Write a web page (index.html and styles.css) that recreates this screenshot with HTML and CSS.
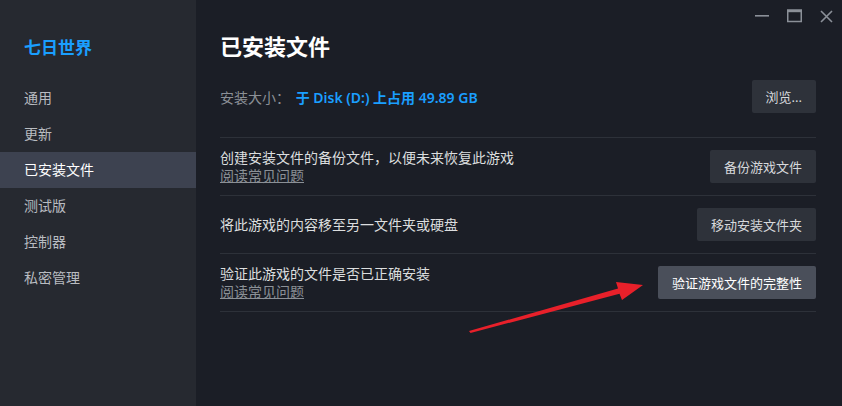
FILE: index.html
```html
<!DOCTYPE html>
<html>
<head>
  <title>已安装文件</title>
  <link rel="stylesheet" href="styles.css">
</head>
<body>
  <div class="sidebar">
    <div class="game-title">七日世界</div>
    <div class="nav-item">通用</div>
    <div class="nav-item">更新</div>
    <div class="nav-item active">已安装文件</div>
    <div class="nav-item">测试版</div>
    <div class="nav-item">控制器</div>
    <div class="nav-item">私密管理</div>
  </div>

  <div class="main">
    <div class="titlebar">
      <div class="win-btn">
        <svg width="14" height="14" viewBox="0 0 14 14"><rect x="0" y="6" width="14" height="1.6" fill="#8b9098"/></svg>
      </div>
      <div class="win-btn">
        <svg width="15" height="14" viewBox="0 0 15 14"><rect x="0.75" y="1" width="13.5" height="11.5" fill="none" stroke="#8b9098" stroke-width="1.5"/><rect x="0.75" y="1" width="13.5" height="2.2" fill="#8b9098"/></svg>
      </div>
      <div class="win-btn">
        <svg width="13" height="13" viewBox="0 0 13 13"><path d="M1 1 L12 12 M12 1 L1 12" stroke="#8b9098" stroke-width="1.6"/></svg>
      </div>
    </div>

    <div class="content">
      <h1>已安装文件</h1>

      <div class="size-row">
        <div class="size-info">
          <span class="size-label">安装大小：</span>
          <span class="size-value">于 Disk (D:) 上占用 49.89 GB</span>
        </div>
        <button class="btn">浏览...</button>
      </div>

      <div class="row">
        <div class="row-text">
          <div>创建安装文件的备份文件，以便未来恢复此游戏</div>
          <a class="faq">阅读常见问题</a>
        </div>
        <button class="btn">备份游戏文件</button>
      </div>

      <div class="row">
        <div class="row-text">
          <div>将此游戏的内容移至另一文件夹或硬盘</div>
        </div>
        <button class="btn">移动安装文件夹</button>
      </div>

      <div class="row">
        <div class="row-text">
          <div>验证此游戏的文件是否已正确安装</div>
          <a class="faq">阅读常见问题</a>
        </div>
        <button class="btn hover">验证游戏文件的完整性</button>
      </div>
    </div>
  </div>

  <!-- red arrow annotation on top of the page -->
  <svg class="arrow" width="842" height="406" viewBox="0 0 842 406">
    <polygon points="469,331 618,288.6 616,282 643,285 622,300 619.5,293.8 470.5,333" fill="#e8202a"/>
  </svg>
</body>
</html>
```

FILE: styles.css
```css
body {
  margin: 0;
  width: 842px;
  height: 406px;
  display: flex;
  overflow: hidden;
  background-color: #1b1e26;
  font-family: "Noto Sans", "Noto Sans CJK SC", sans-serif;
  font-size: 14px;
  position: relative;
}

.sidebar {
  width: 196px;
  flex-shrink: 0;
  background-color: #262930;
  padding-top: 36px;
}

.game-title {
  color: #1a9fff;
  font-size: 17px;
  font-weight: bold;
  line-height: 24px;
  padding-left: 24px;
  margin-bottom: 20px;
}

.nav-item {
  height: 36px;
  line-height: 36px;
  padding-left: 24px;
  color: #b9bcc1;
}

.nav-item.active {
  background-color: #3d4250;
  color: #ffffff;
}

.main {
  flex: 1;
  display: flex;
  flex-direction: column;
}

.titlebar {
  height: 30px;
  display: flex;
  justify-content: flex-end;
}

.win-btn {
  width: 32px;
  height: 30px;
  display: flex;
  align-items: center;
  justify-content: center;
  padding-top: 2px;
  box-sizing: border-box;
}

.content {
  padding: 0 26px 0 24px;
}

h1 {
  margin: 0;
  color: #ffffff;
  font-size: 22px;
  font-weight: bold;
  line-height: 32px;
}

.size-row {
  margin-top: 18px;
  padding-bottom: 24px;
  border-bottom: 1px solid #2d3139;
  display: flex;
  align-items: center;
  justify-content: space-between;
}

.size-label {
  color: #8b9096;
  margin-right: 2px;
}

.size-value {
  color: #1a9fff;
  font-weight: 600;
}

.row {
  height: 57px;
  border-bottom: 1px solid #2d3139;
  display: flex;
  align-items: center;
  justify-content: space-between;
}

.row-text {
  color: #dcdedf;
  line-height: 18px;
}

.faq {
  display: block;
  color: #8b9096;
  text-decoration: underline;
  cursor: pointer;
}

.btn {
  height: 33px;
  padding: 0 14px;
  border: none;
  border-radius: 2px;
  background-color: #2e323a;
  color: #d7d9dc;
  font-family: "Noto Sans", "Noto Sans CJK SC", sans-serif;
  font-size: 13px;
  cursor: pointer;
}

.btn.hover {
  background-color: #4a4f5a;
  color: #ffffff;
}

.arrow {
  position: absolute;
  top: 0;
  left: 0;
  pointer-events: none;
}
```
